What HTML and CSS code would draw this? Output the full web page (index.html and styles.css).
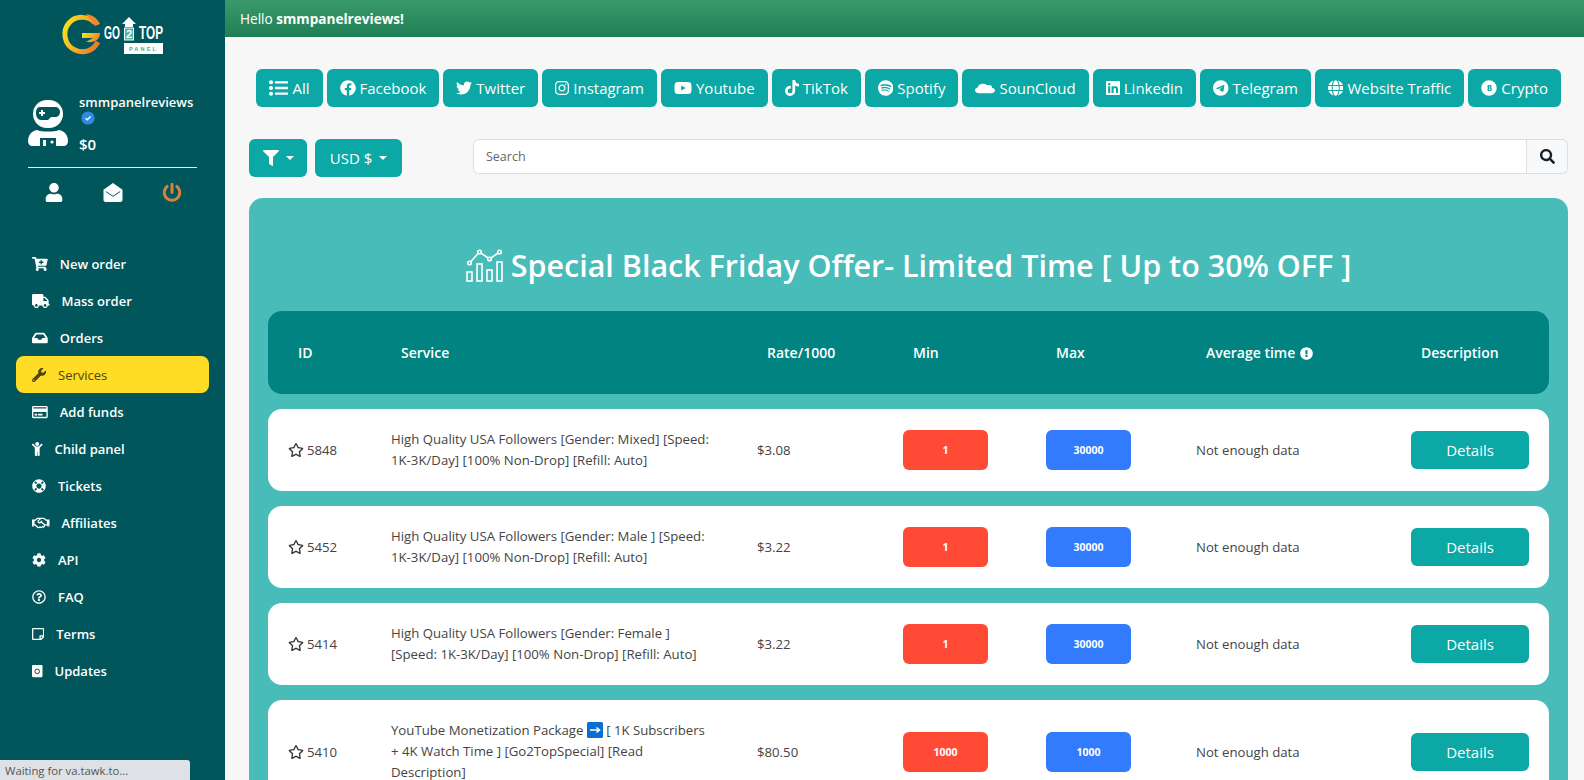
FILE: index.html
```html
<!DOCTYPE html>
<html lang="en">
<head>
    <meta charset="UTF-8">
    <meta name="viewport" content="width=device-width, initial-scale=1.0">
    <title>Services</title>
    <link rel="stylesheet" href="styles.css">
</head>
<body>

<svg class="sprite" xmlns="http://www.w3.org/2000/svg">
    <symbol id="star" viewBox="0 0 576 512"><path d="M528.1 171.5L382 150.2 316.7 17.8c-11.7-23.6-45.6-23.9-57.4 0L194 150.2 47.9 171.5c-26.2 3.8-36.7 36.1-17.7 54.6l105.7 103-25 145.5c-4.5 26.3 23.2 46 46.4 33.7L288 439.6l130.7 68.7c23.2 12.2 50.9-7.4 46.4-33.7l-25-145.5 105.7-103c19-18.5 8.5-50.8-17.7-54.6zM388.6 312.3l23.7 138.4L288 385.4l-124.3 65.3 23.7-138.4-100.6-98 139-20.2 62.2-126 62.2 126 139 20.2-100.6 98z"/></symbol>
</svg>

<aside class="sidebar">
    <svg class="logo" viewBox="0 0 102 40" xmlns="http://www.w3.org/2000/svg">
        <defs>
            <linearGradient id="logoGrad" x1="0" y1="0.3" x2="1" y2="0.7">
                <stop offset="0" stop-color="#f7dc1f"/>
                <stop offset="0.55" stop-color="#f5a623"/>
                <stop offset="1" stop-color="#ef7a2c"/>
            </linearGradient>
        </defs>
        <path d="M33 9 C27 2 14 1 7 9 C0 17 2 31 13 36 C22 40 31 37 36 28" fill="none" stroke="url(#logoGrad)" stroke-width="5"/>
        <path d="M24 0 C31 1 36 5 38 10 L33 12 C31 8 28 4 24 0Z" fill="#f2872b"/>
        <path d="M20 19 H38 C38 25 34 29 24 28 L31 24 H20Z" fill="url(#logoGrad)"/>
        <text class="logo-word" x="42" y="25" textLength="16" lengthAdjust="spacingAndGlyphs">GO</text>
        <path d="M67 3 L74 10 H71 V13 H63 V10 H60Z" fill="#fff"/>
        <rect x="62.5" y="14" width="9" height="12" fill="#4fb5a8" stroke="#fff"/>
        <text class="logo-two" x="67" y="24" text-anchor="middle">2</text>
        <text class="logo-word" x="77" y="25" textLength="24" lengthAdjust="spacingAndGlyphs">TOP</text>
        <rect x="62" y="29" width="39" height="11" fill="#fff"/>
        <text class="logo-panel" x="81.5" y="37" text-anchor="middle">PANEL</text>
    </svg>

    <div class="user-box">
        <svg class="avatar" viewBox="0 0 40 46" xmlns="http://www.w3.org/2000/svg">
            <rect x="5" y="0" width="30" height="28" rx="14" fill="#fff"/>
            <path d="M12 7 H27 C30 7 32 9 32 12 C32 15 30 17 27 17 H23 L20 20 H13 C10 20 8 17 8 13 C8 10 9 7 12 7Z" fill="#00565b"/>
            <path d="M13 10 H15 V12 H17 V14 H15 V16 H13 V14 H11 V12 H13Z" fill="#fff"/>
            <path d="M9 30 C13 32 27 32 31 30 C37 31 40 36 40 41 C40 44 38 46 36 46 H28 V38 H12 V46 H4 C2 46 0 44 0 41 C0 36 3 31 9 30Z" fill="#fff"/>
            <rect x="15" y="40" width="3" height="6" fill="#fff"/>
            <circle cx="24" cy="42" r="1.6" fill="#fff"/>
        </svg>
        <div class="user-info">
            <div class="user-name">smmpanelreviews</div>
            <svg class="verified" viewBox="0 0 14 14" xmlns="http://www.w3.org/2000/svg">
                <circle cx="7" cy="7" r="6.6" fill="#2f8be0"/>
                <path d="M4.5 7.3 L6.2 8.8 L9.6 5.4" fill="none" stroke="#fff" stroke-width="1.4"/>
            </svg>
            <div class="user-balance">$0</div>
        </div>
    </div>
    <div class="user-divider"></div>
    <div class="user-links">
        <svg class="link-icon" viewBox="0 0 448 512" xmlns="http://www.w3.org/2000/svg"><path d="M224 256c70.7 0 128-57.3 128-128S294.7 0 224 0 96 57.3 96 128s57.3 128 128 128zm89.6 32h-16.7c-22.2 10.2-46.9 16-72.9 16s-50.6-5.8-72.9-16h-16.7C60.2 288 0 348.2 0 422.4V464c0 26.5 21.5 48 48 48h352c26.5 0 48-21.5 48-48v-41.6c0-74.2-60.2-134.4-134.4-134.4z"/></svg>
        <svg class="link-icon" viewBox="0 0 20 20" xmlns="http://www.w3.org/2000/svg">
            <path d="M10 0 L20 7 V18 C20 19 19 20 18 20 H2 C1 20 0 19 0 18 V7Z"/>
            <path class="mail-fold" d="M2.5 9 L10 14 L17.5 9"/>
        </svg>
        <svg class="link-icon link-power" viewBox="0 0 512 512" xmlns="http://www.w3.org/2000/svg"><path d="M400 54.1c63 45 104 118.6 104 201.9 0 136.8-110.8 247.7-247.5 248C120 504.3 8.2 393 8 256.4 7.9 173.1 48.9 99.3 111.8 54.2c11.7-8.3 28-4.8 35 7.7L162.6 90c5.9 10.5 3.1 23.8-6.6 31-41.5 30.8-68 79.6-68 134.9-.1 92.3 74.5 168.1 168 168.1 91.6 0 168.6-74.2 168-169.1-.3-51.8-24.7-101.8-68.1-134-9.7-7.2-12.4-20.5-6.5-30.9l15.8-28.1c7-12.4 23.2-16.1 34.8-7.9zM296 264V24c0-13.3-10.7-24-24-24h-32c-13.3 0-24 10.7-24 24v240c0 13.3 10.7 24 24 24h32c13.3 0 24-10.7 24-24z"/></svg>
    </div>

    <nav class="side-nav">
        <a class="nav-item">
            <svg viewBox="0 0 576 512" xmlns="http://www.w3.org/2000/svg"><path d="M504.717 320H211.572l6.545 32h268.418c15.401 0 26.816 14.301 23.403 29.319l-5.517 24.276C523.112 414.668 536 433.828 536 456c0 31.202-25.519 56.444-56.824 55.994-29.823-.429-54.35-24.631-55.155-54.447-.44-16.287 6.085-31.049 16.803-41.548H231.176C241.553 426.165 248 440.326 248 456c0 31.813-26.528 57.431-58.67 55.938-28.54-1.325-51.751-24.385-53.251-52.917-1.158-22.034 10.436-41.455 28.051-51.586L93.883 64H24C10.745 64 0 53.255 0 40V24C0 10.745 10.745 0 24 0h102.529c11.401 0 21.228 8.021 23.513 19.19L159.208 64H551.99c15.401 0 26.816 14.301 23.403 29.319l-47.273 208C525.637 312.246 515.923 320 504.717 320zM408 168h-48v-40c0-8.837-7.163-16-16-16h-16c-8.837 0-16 7.163-16 16v40h-48c-8.837 0-16 7.163-16 16v16c0 8.837 7.163 16 16 16h48v40c0 8.837 7.163 16 16 16h16c8.837 0 16-7.163 16-16v-40h48c8.837 0 16-7.163 16-16v-16c0-8.837-7.163-16-16-16z"/></svg>
            New order
        </a>
        <a class="nav-item">
            <svg viewBox="0 0 640 512" xmlns="http://www.w3.org/2000/svg"><path d="M624 352h-16V243.9c0-12.7-5.1-24.9-14.1-33.9L494 110.1c-9-9-21.2-14.1-33.9-14.1H416V48c0-26.5-21.5-48-48-48H48C21.5 0 0 21.5 0 48v320c0 26.5 21.5 48 48 48h16c0 53 43 96 96 96s96-43 96-96h128c0 53 43 96 96 96s96-43 96-96h48c8.8 0 16-7.2 16-16v-32c0-8.8-7.2-16-16-16zM160 464c-26.5 0-48-21.5-48-48s21.5-48 48-48 48 21.5 48 48-21.5 48-48 48zm320 0c-26.5 0-48-21.5-48-48s21.5-48 48-48 48 21.5 48 48-21.5 48-48 48zm80-208H416V144h44.1l99.9 99.9V256z"/></svg>
            Mass order
        </a>
        <a class="nav-item">
            <svg viewBox="0 0 576 512" xmlns="http://www.w3.org/2000/svg"><path d="M567.938 243.908L462.25 85.374A48.003 48.003 0 0 0 422.311 64H153.689a48 48 0 0 0-39.938 21.374L8.062 243.908A47.994 47.994 0 0 0 0 270.533V400c0 26.51 21.49 48 48 48h480c26.51 0 48-21.49 48-48V270.533a47.994 47.994 0 0 0-8.062-26.625zM162.252 128h251.497l85.333 128H376l-32 64H232l-32-64H76.918l85.334-128z"/></svg>
            Orders
        </a>
        <a class="nav-item active">
            <svg viewBox="0 0 512 512" xmlns="http://www.w3.org/2000/svg"><path d="M507.73 109.1c-2.24-9.03-13.54-12.09-20.12-5.51l-74.36 74.36-67.88-11.31-11.31-67.88 74.36-74.36c6.62-6.62 3.43-17.9-5.66-20.16-47.38-11.74-99.55.91-136.58 37.93-39.64 39.64-50.55 97.1-34.05 147.2L18.74 402.76c-24.99 24.99-24.99 65.51 0 90.5 24.99 24.99 65.51 24.99 90.5 0l213.21-213.21c50.12 16.71 107.47 5.68 147.37-34.22 37.07-37.07 49.7-89.32 37.91-136.73zM64 472c-13.25 0-24-10.75-24-24 0-13.26 10.75-24 24-24s24 10.74 24 24c0 13.25-10.75 24-24 24z"/></svg>
            Services
        </a>
        <a class="nav-item">
            <svg viewBox="0 0 576 512" xmlns="http://www.w3.org/2000/svg"><path d="M527.9 32H48.1C21.5 32 0 53.5 0 80v352c0 26.5 21.5 48 48.1 48h479.8c26.6 0 48.1-21.5 48.1-48V80c0-26.5-21.5-48-48.1-48zM54.1 80h467.8c3.3 0 6 2.7 6 6v42H48.1V86c0-3.3 2.7-6 6-6zm467.8 352H54.1c-3.3 0-6-2.7-6-6V256h479.8v170c0 3.3-2.7 6-6 6zM192 332v40c0 6.6-5.4 12-12 12h-72c-6.6 0-12-5.4-12-12v-40c0-6.6 5.4-12 12-12h72c6.6 0 12 5.4 12 12zm192 0v40c0 6.6-5.4 12-12 12H236c-6.6 0-12-5.4-12-12v-40c0-6.6 5.4-12 12-12h136c6.6 0 12 5.4 12 12z"/></svg>
            Add funds
        </a>
        <a class="nav-item">
            <svg viewBox="0 0 384 512" xmlns="http://www.w3.org/2000/svg"><path d="M120 72c0-39.765 32.235-72 72-72s72 32.235 72 72c0 39.764-32.235 72-72 72s-72-32.236-72-72zm254.627 1.373c-12.496-12.497-32.758-12.497-45.254 0L242.745 160H141.254L54.627 73.373c-12.496-12.497-32.758-12.497-45.254 0-12.497 12.497-12.497 32.758 0 45.255L104 213.254V480c0 17.673 14.327 32 32 32h16c17.673 0 32-14.327 32-32V368h16v112c0 17.673 14.327 32 32 32h16c17.673 0 32-14.327 32-32V213.254l94.627-94.627c12.497-12.497 12.497-32.757 0-45.254z"/></svg>
            Child panel
        </a>
        <a class="nav-item">
            <svg viewBox="0 0 512 512" xmlns="http://www.w3.org/2000/svg"><path d="M256 8C119.033 8 8 119.033 8 256s111.033 248 248 248 248-111.033 248-248S392.967 8 256 8zm173.696 119.559l-63.399 63.399c-10.987-18.559-26.67-34.252-45.255-45.255l63.399-63.399a218.396 218.396 0 0 1 45.255 45.255zM256 352c-53.019 0-96-42.981-96-96s42.981-96 96-96 96 42.981 96 96-42.981 96-96 96zM127.559 82.304l63.399 63.399c-18.559 10.987-34.252 26.67-45.255 45.255l-63.399-63.399a218.372 218.372 0 0 1 45.255-45.255zM82.304 384.441l63.399-63.399c10.987 18.559 26.67 34.252 45.255 45.255l-63.399 63.399a218.396 218.396 0 0 1-45.255-45.255zm302.137 45.255l-63.399-63.399c18.559-10.987 34.252-26.67 45.255-45.255l63.399 63.399a218.429 218.429 0 0 1-45.255 45.255z"/></svg>
            Tickets
        </a>
        <a class="nav-item">
            <svg viewBox="0 0 640 512" xmlns="http://www.w3.org/2000/svg"><path d="M519.2 127.9l-47.6-47.6A56.252 56.252 0 0 0 432 64H205.2c-14.8 0-29.1 5.9-39.6 16.3L118 127.9H0v255.7h64c17.6 0 31.8-14.2 31.9-31.7h9.1l84.6 76.4c30.9 25.1 73.8 25.7 105.6 3.8 12.5 10.8 26 15.9 41.1 15.9 18.2 0 35.3-7.4 48.8-24 22.1 8.7 48.2 2.6 64-16.8l26.2-32.3c5.6-6.9 9.1-14.8 10.9-23h57.9c.1 17.5 14.4 31.7 31.9 31.7h64V127.9H519.2zM48 351.6c-8.8 0-16-7.2-16-16s7.2-16 16-16 16 7.2 16 16c0 8.9-7.2 16-16 16zm390-6.9l-26.1 32.2c-2.8 3.4-7.8 4-11.3 1.2l-23.9-19.4-30 36.5c-6 7.3-15 4.8-18 2.4l-36.8-31.5-15.6 19.2c-13.9 17.1-39.2 19.7-55.3 6.6l-97.3-88H96V175.8h41.9l61.7-61.6c2-.8 3.7-1.5 5.7-2.3H262l-38.7 35.5c-29.4 26.9-31.1 72.3-4.4 101.3 14.8 16.2 61.2 41.2 101.5 4.4l8.2-7.5 108.2 87.8c3.4 2.8 3.9 7.9 1.2 11.3zm106-40.8h-69.2c-2.3-2.8-4.9-5.4-7.7-7.7l-102.7-83.4 12.5-11.4c6.5-6 7-16.1 1-22.6L367 167.1c-6-6.5-16.1-6.9-22.6-1l-55.2 50.6c-9.5 8.7-25.7 9.4-34.6 0-9.3-9.9-8.5-25.1 1.2-33.9l65.6-60.1c7.4-6.8 17-10.5 27-10.5l83.7-.2c2.1 0 4.1.8 5.5 2.3l61.7 61.6H544v128zm48 47.7c-8.8 0-16-7.2-16-16s7.2-16 16-16 16 7.2 16 16c0 8.9-7.2 16-16 16z"/></svg>
            Affiliates
        </a>
        <a class="nav-item">
            <svg viewBox="0 0 512 512" xmlns="http://www.w3.org/2000/svg"><path d="M487.4 315.7l-42.6-24.6c4.3-23.2 4.3-47 0-70.2l42.6-24.6c4.9-2.8 7.1-8.6 5.5-14-11.1-35.6-30-67.8-54.7-94.6-3.8-4.1-10-5.1-14.8-2.3L380.8 110c-17.9-15.4-38.5-27.3-60.8-35.1V25.8c0-5.6-3.9-10.5-9.4-11.7-36.7-8.2-74.3-7.8-109.2 0-5.5 1.2-9.4 6.1-9.4 11.7V75c-22.2 7.9-42.8 19.8-60.8 35.1L88.7 85.5c-4.9-2.8-11-1.9-14.8 2.3-24.7 26.7-43.6 58.9-54.7 94.6-1.7 5.4.6 11.2 5.5 14L67.3 221c-4.3 23.2-4.3 47 0 70.2l-42.6 24.6c-4.9 2.8-7.1 8.6-5.5 14 11.1 35.6 30 67.8 54.7 94.6 3.8 4.1 10 5.1 14.8 2.3l42.6-24.6c17.9 15.4 38.5 27.3 60.8 35.1v49.2c0 5.6 3.9 10.5 9.4 11.7 36.7 8.2 74.3 7.8 109.2 0 5.5-1.2 9.4-6.1 9.4-11.7v-49.2c22.2-7.9 42.8-19.8 60.8-35.1l42.6 24.6c4.9 2.8 11 1.9 14.8-2.3 24.7-26.7 43.6-58.9 54.7-94.6 1.5-5.5-.7-11.3-5.6-14.1zM256 336c-44.1 0-80-35.9-80-80s35.9-80 80-80 80 35.9 80 80-35.9 80-80 80z"/></svg>
            API
        </a>
        <a class="nav-item">
            <svg viewBox="0 0 512 512" xmlns="http://www.w3.org/2000/svg"><path d="M256 8C119.043 8 8 119.083 8 256c0 136.997 111.043 248 248 248s248-111.003 248-248C504 119.083 392.957 8 256 8zm0 448c-110.532 0-200-89.431-200-200 0-110.495 89.472-200 200-200 110.491 0 200 89.471 200 200 0 110.53-89.431 200-200 200zm107.244-255.2c0 67.052-72.421 68.084-72.421 92.863V300c0 6.627-5.373 12-12 12h-45.647c-6.627 0-12-5.373-12-12v-8.659c0-35.745 27.1-50.034 47.579-61.516 17.561-9.845 28.324-16.541 28.324-29.579 0-17.246-21.999-28.693-39.784-28.693-23.189 0-33.894 10.977-48.942 29.969-4.057 5.12-11.46 6.071-16.666 2.124l-27.824-21.098c-5.107-3.872-6.251-11.066-2.644-16.363C184.846 131.491 214.94 112 261.794 112c49.071 0 101.45 38.304 101.45 88.8zM298 368c0 23.159-18.841 42-42 42s-42-18.841-42-42 18.841-42 42-42 42 18.841 42 42z"/></svg>
            FAQ
        </a>
        <a class="nav-item">
            <svg viewBox="0 0 448 512" xmlns="http://www.w3.org/2000/svg"><path d="M448 348.106V80c0-26.51-21.49-48-48-48H48C21.49 32 0 53.49 0 80v351.988c0 26.51 21.49 48 48 48h268.118a48 48 0 0 0 33.941-14.059l83.882-83.882A48 48 0 0 0 448 348.106zm-128 80v-76.118h76.118L320 428.106zM400 80v223.988H296c-13.255 0-24 10.745-24 24v104H48V80h352z"/></svg>
            Terms
        </a>
        <a class="nav-item">
            <svg viewBox="0 0 384 512" xmlns="http://www.w3.org/2000/svg">
                <rect y="32" width="384" height="448" rx="40"/>
                <circle class="updates-ring" cx="192" cy="270" r="85"/>
            </svg>
            Updates
        </a>
    </nav>
</aside>

<main class="content">
    <div class="hello-bar">Hello&nbsp;<b>smmpanelreviews!</b></div>

    <div class="page-body">
        <div class="category-list">
            <a class="chip">
                <svg viewBox="0 0 17 14" xmlns="http://www.w3.org/2000/svg">
                    <circle cx="1.8" cy="2" r="1.8"/><circle cx="1.8" cy="7" r="1.8"/><circle cx="1.8" cy="12" r="1.8"/>
                    <rect x="5" y="1" width="12" height="2" rx="1"/><rect x="5" y="6" width="12" height="2" rx="1"/><rect x="5" y="11" width="12" height="2" rx="1"/>
                </svg>
                All
            </a>
            <a class="chip">
                <svg viewBox="0 0 512 512" xmlns="http://www.w3.org/2000/svg"><path d="M504 256C504 119 393 8 256 8S8 119 8 256c0 123.78 90.69 226.38 209.25 245V327.69h-63V256h63v-54.64c0-62.15 37-96.48 93.67-96.48 27.14 0 55.52 4.84 55.52 4.84v61h-31.28c-30.8 0-40.41 19.12-40.41 38.73V256h68.78l-11 71.69h-57.78V501C413.31 482.38 504 379.78 504 256z"/></svg>
                Facebook
            </a>
            <a class="chip">
                <svg viewBox="0 0 512 512" xmlns="http://www.w3.org/2000/svg"><path d="M459.37 151.716c.325 4.548.325 9.097.325 13.645 0 138.72-105.583 298.558-298.558 298.558-59.452 0-114.68-17.219-161.137-47.106 8.447.974 16.568 1.299 25.34 1.299 49.055 0 94.213-16.568 130.274-44.832-46.132-.975-84.792-31.188-98.112-72.772 6.498.974 12.995 1.624 19.818 1.624 9.421 0 18.843-1.3 27.614-3.573-48.081-9.747-84.143-51.98-84.143-102.985v-1.299c13.969 7.797 30.214 12.67 47.431 13.319-28.264-18.843-46.781-51.005-46.781-87.391 0-19.492 5.197-37.36 14.294-52.954 51.655 63.675 129.3 105.258 216.365 109.807-1.624-7.797-2.599-15.918-2.599-24.04 0-57.828 46.782-104.934 104.934-104.934 30.213 0 57.502 12.67 76.67 33.137 23.715-4.548 46.456-13.32 66.599-25.34-7.798 24.366-24.366 44.833-46.132 57.827 21.117-2.273 41.584-8.122 60.426-16.243-14.292 20.791-32.161 39.308-52.628 54.253z"/></svg>
                Twitter
            </a>
            <a class="chip">
                <svg viewBox="0 0 448 512" xmlns="http://www.w3.org/2000/svg"><path d="M224.1 141c-63.6 0-114.9 51.3-114.9 114.9s51.3 114.9 114.9 114.9S339 319.5 339 255.9 287.7 141 224.1 141zm0 189.6c-41.1 0-74.7-33.5-74.7-74.7s33.5-74.7 74.7-74.7 74.7 33.5 74.7 74.7-33.6 74.7-74.7 74.7zm146.4-194.3c0 14.9-12 26.8-26.8 26.8-14.9 0-26.8-12-26.8-26.8s12-26.8 26.8-26.8 26.8 12 26.8 26.8zm76.1 27.2c-1.7-35.9-9.9-67.7-36.2-93.9-26.2-26.2-58-34.4-93.9-36.2-37-2.1-147.9-2.1-184.9 0-35.8 1.7-67.6 9.9-93.9 36.1s-34.4 58-36.2 93.9c-2.1 37-2.1 147.9 0 184.9 1.7 35.9 9.9 67.7 36.2 93.9s58 34.4 93.9 36.2c37 2.1 147.9 2.1 184.9 0 35.9-1.7 67.7-9.9 93.9-36.2 26.2-26.2 34.4-58 36.2-93.9 2.1-37 2.1-147.8 0-184.8zM398.8 388c-7.8 19.6-22.9 34.7-42.6 42.6-29.5 11.7-99.5 9-132.1 9s-102.7 2.6-132.1-9c-19.6-7.8-34.7-22.9-42.6-42.6-11.7-29.5-9-99.5-9-132.1s-2.6-102.7 9-132.1c7.8-19.6 22.9-34.7 42.6-42.6 29.5-11.7 99.5-9 132.1-9s102.7-2.6 132.1 9c19.6 7.8 34.7 22.9 42.6 42.6 11.7 29.5 9 99.5 9 132.1s2.7 102.7-9 132.1z"/></svg>
                Instagram
            </a>
            <a class="chip">
                <svg viewBox="0 0 576 512" xmlns="http://www.w3.org/2000/svg"><path d="M549.655 124.083c-6.281-23.65-24.787-42.276-48.284-48.597C458.781 64 288 64 288 64S117.22 64 74.629 75.486c-23.497 6.322-42.003 24.947-48.284 48.597-11.412 42.867-11.412 132.305-11.412 132.305s0 89.438 11.412 132.305c6.281 23.65 24.787 41.5 48.284 47.821C117.22 448 288 448 288 448s170.78 0 213.371-11.486c23.497-6.321 42.003-24.171 48.284-47.821 11.412-42.867 11.412-132.305 11.412-132.305s0-89.438-11.412-132.305zm-317.51 213.508V175.185l142.739 81.205-142.739 81.201z"/></svg>
                Youtube
            </a>
            <a class="chip">
                <svg viewBox="0 0 448 512" xmlns="http://www.w3.org/2000/svg"><path d="M448,209.91a210.06,210.06,0,0,1-122.77-39.25V349.38A162.55,162.55,0,1,1,185,188.31V278.2a74.62,74.62,0,1,0,52.23,71.18V0l88,0a121.18,121.18,0,0,0,1.86,22.17h0A122.18,122.18,0,0,0,381,102.39a121.43,121.43,0,0,0,67,20.14Z"/></svg>
                TikTok
            </a>
            <a class="chip">
                <svg viewBox="0 0 496 512" xmlns="http://www.w3.org/2000/svg"><path d="M248 8C111.1 8 0 119.1 0 256s111.1 248 248 248 248-111.1 248-248S384.9 8 248 8zm100.7 364.9c-4.2 0-6.8-1.3-10.7-3.6-62.4-37.6-135-39.2-206.7-24.5-3.9 1-9 2.6-11.9 2.6-9.7 0-15.8-7.7-15.8-15.8 0-10.3 6.1-15.2 13.6-16.8 81.9-18.1 165.6-16.5 237 26.2 6.1 3.9 9.7 7.4 9.7 16.5s-7.1 15.4-15.2 15.4zm26.9-65.6c-5.2 0-8.7-2.3-12.3-4.2-62.5-37-155.7-51.9-238.6-29.4-4.8 1.3-7.4 2.6-11.9 2.6-10.7 0-19.4-8.7-19.4-19.4s5.2-17.8 15.5-20.7c27.8-7.8 56.2-13.6 97.8-13.6 64.9 0 127.6 16.1 177 45.5 8.1 4.8 11.3 11 11.3 19.7-.1 10.8-8.5 19.5-19.4 19.5zm31-76.2c-5.2 0-8.4-1.3-12.9-3.9-71.2-42.5-198.5-52.7-280.9-29.7-3.6 1-8.1 2.6-12.9 2.6-13.2 0-23.3-10.3-23.3-23.6 0-13.6 8.4-21.3 17.4-23.9 35.2-10.3 74.6-15.2 117.5-15.2 73 0 149.5 15.2 205.4 47.8 7.8 4.5 12.9 10.7 12.9 22.6 0 13.6-11 23.3-23.2 23.3z"/></svg>
                Spotify
            </a>
            <a class="chip">
                <svg class="cloud-icon" viewBox="0 0 640 512" xmlns="http://www.w3.org/2000/svg" preserveAspectRatio="none"><path d="M537.6 226.6c4.1-10.7 6.4-22.4 6.4-34.6 0-53-43-96-96-96-19.7 0-38.1 6-53.3 16.2C367 64.2 315.3 32 256 32c-88.4 0-160 71.6-160 160 0 2.7.1 5.4.2 8.1C40.2 219.8 0 273.2 0 336c0 79.5 64.5 144 144 144h368c70.7 0 128-57.3 128-128 0-61.9-44-113.6-102.4-125.4z"/></svg>
                SounCloud
            </a>
            <a class="chip">
                <svg viewBox="0 0 448 512" xmlns="http://www.w3.org/2000/svg"><path d="M416 32H31.9C14.3 32 0 46.5 0 64.3v383.4C0 465.5 14.3 480 31.9 480H416c17.6 0 32-14.5 32-32.3V64.3c0-17.8-14.4-32.3-32-32.3zM135.4 416H69V202.2h66.5V416zm-33.2-243c-21.3 0-38.5-17.3-38.5-38.5S80.9 96 102.2 96c21.2 0 38.5 17.3 38.5 38.5 0 21.3-17.2 38.5-38.5 38.5zm282.1 243h-66.4V312c0-24.8-.5-56.7-34.5-56.7-34.6 0-39.9 27-39.9 54.9V416h-66.4V202.2h63.7v29.2h.9c8.9-16.8 30.6-34.5 62.9-34.5 67.2 0 79.7 44.3 79.7 101.9V416z"/></svg>
                Linkedin
            </a>
            <a class="chip">
                <svg viewBox="0 0 496 512" xmlns="http://www.w3.org/2000/svg"><path d="M248,8C111.033,8,0,119.033,0,256S111.033,504,248,504,496,392.967,496,256,384.967,8,248,8ZM362.952,176.66c-3.732,39.215-19.881,134.378-28.1,178.3-3.476,18.584-10.322,24.816-16.948,25.425-14.4,1.326-25.338-9.517-39.287-18.661-21.827-14.308-34.158-23.215-55.346-37.177-24.485-16.135-8.612-25,5.342-39.5,3.652-3.793,67.107-61.51,68.335-66.746.153-.655.3-3.1-1.154-4.384s-3.59-.849-5.135-.5q-3.283.746-104.608,69.142-14.845,10.194-26.894,9.934c-8.855-.191-25.888-5.006-38.551-9.123-15.531-5.048-27.875-7.717-26.8-16.291q.84-6.7,18.45-13.7,108.446-47.248,144.628-62.3c68.872-28.647,83.183-33.623,92.511-33.789,2.052-.034,6.639.474,9.61,2.885a10.452,10.452,0,0,1,3.53,6.716A43.765,43.765,0,0,1,362.952,176.66Z"/></svg>
                Telegram
            </a>
            <a class="chip">
                <svg viewBox="0 0 496 512" xmlns="http://www.w3.org/2000/svg"><path d="M336.5 160C322 70.7 287.8 8 248 8s-74 62.7-88.5 152h177zM152 256c0 22.2 1.2 43.5 3.3 64h185.3c2.1-20.5 3.3-41.8 3.3-64s-1.2-43.5-3.3-64H155.3c-2.1 20.5-3.3 41.8-3.3 64zm324.7-96c-28.6-67.9-86.5-120.4-158-141.6 24.4 33.8 41.2 84.7 50 141.6h108zM177.2 18.4C105.8 39.6 47.8 92.1 19.3 160h108c8.7-56.9 25.5-107.8 49.9-141.6zM487.4 192H372.7c2.1 21 3.3 42.5 3.3 64s-1.2 43-3.3 64h114.6c5.5-20.5 8.6-41.8 8.6-64s-3.1-43.5-8.5-64zM120 256c0-21.5 1.2-43 3.3-64H8.6C3.2 212.5 0 233.8 0 256s3.2 43.5 8.6 64h114.6c-2-21-3.2-42.5-3.2-64zm39.5 96c14.5 89.3 48.7 152 88.5 152s74-62.7 88.5-152h-177zm159.3 141.6c71.4-21.2 129.4-73.7 158-141.6h-108c-8.8 56.9-25.6 107.8-50 141.6zM19.3 352c28.6 67.9 86.5 120.4 158 141.6-24.4-33.8-41.2-84.7-50-141.6h-108z"/></svg>
                Website Traffic
            </a>
            <a class="chip">
                <svg viewBox="0 0 512 512" xmlns="http://www.w3.org/2000/svg">
                    <path fill-rule="evenodd" d="M256 8a248 248 0 1 0 0 496a248 248 0 1 0 0-496zM210 160h70c40 0 60 20 60 48c0 20-10 34-26 42c22 6 36 22 36 46c0 34-26 56-66 56h-74zm44 36v44h22c14 0 22-8 22-22s-8-22-22-22zm0 78v46h28c16 0 24-8 24-23s-8-23-24-23z"/>
                </svg>
                Crypto
            </a>
        </div>

        <div class="toolbar">
            <a class="tool-btn filter-btn">
                <svg viewBox="0 0 512 512" xmlns="http://www.w3.org/2000/svg"><path d="M487.976 0H24.028C2.71 0-8.047 25.866 7.058 40.971L192 225.941V432c0 7.831 3.821 15.17 10.237 19.662l80 55.98C298.02 518.69 320 507.493 320 487.98V225.941l184.947-184.97C520.021 25.896 509.338 0 487.976 0z"/></svg>
                <span class="caret"></span>
            </a>
            <a class="tool-btn currency-btn">USD $ <span class="caret"></span></a>
            <div class="search-group">
                <input class="search-input" type="text" placeholder="Search">
                <button class="search-btn" type="button">
                    <svg viewBox="0 0 512 512" xmlns="http://www.w3.org/2000/svg"><path d="M505 442.7L405.3 343c-4.5-4.5-10.6-7-17-7H372c27.6-35.3 44-79.7 44-128C416 93.1 322.9 0 208 0S0 93.1 0 208s93.1 208 208 208c48.3 0 92.7-16.4 128-44v16.3c0 6.4 2.5 12.5 7 17l99.7 99.7c9.4 9.4 24.6 9.4 33.9 0l28.3-28.3c9.4-9.4 9.4-24.6.1-34zM208 336c-70.7 0-128-57.2-128-128 0-70.7 57.2-128 128-128 70.7 0 128 57.2 128 128 0 70.7-57.2 128-128 128z"/></svg>
                </button>
            </div>
        </div>

        <section class="offer-panel">
            <h2 class="offer-title">
                <svg viewBox="0 0 38 34" xmlns="http://www.w3.org/2000/svg">
                    <rect x="1" y="24" width="5" height="9"/>
                    <rect x="11" y="16" width="5" height="17"/>
                    <rect x="21" y="22" width="5" height="11"/>
                    <rect x="31" y="14" width="5" height="19"/>
                    <path d="M3.5 15 L13.5 4 L23.5 11 L33.5 4"/>
                    <circle class="dot" cx="3.5" cy="15" r="1.8"/>
                    <circle class="dot" cx="13.5" cy="4" r="1.8"/>
                    <circle class="dot" cx="23.5" cy="11" r="1.8"/>
                    <circle class="dot" cx="33.5" cy="4" r="1.8"/>
                </svg>
                Special Black Friday Offer- Limited Time [ Up to 30% OFF ]
            </h2>

            <div class="table-head">
                <div class="head-id">ID</div>
                <div>Service</div>
                <div>Rate/1000</div>
                <div>Min</div>
                <div>Max</div>
                <div class="head-avg">Average time
                    <svg viewBox="0 0 512 512" xmlns="http://www.w3.org/2000/svg"><path d="M504 256c0 136.997-111.043 248-248 248S8 392.997 8 256C8 119.083 119.043 8 256 8s248 111.083 248 248zm-248 50c-25.405 0-46 20.595-46 46s20.595 46 46 46 46-20.595 46-46-20.595-46-46-46zm-43.673-165.346l7.418 136c.347 6.364 5.609 11.346 11.982 11.346h48.546c6.373 0 11.635-4.982 11.982-11.346l7.418-136c.375-6.874-5.098-12.654-11.982-12.654h-63.383c-6.884 0-12.356 5.78-11.981 12.654z"/></svg>
                </div>
                <div>Description</div>
            </div>

            <div class="service-row">
                <div class="cell-id"><svg class="star"><use href="#star"/></svg>5848</div>
                <div class="cell-service">High Quality USA Followers [Gender: Mixed] [Speed: 1K-3K/Day] [100% Non-Drop] [Refill: Auto]</div>
                <div>$3.08</div>
                <div><span class="pill pill-min">1</span></div>
                <div><span class="pill pill-max">30000</span></div>
                <div>Not enough data</div>
                <div><a class="details-btn">Details</a></div>
            </div>

            <div class="service-row">
                <div class="cell-id"><svg class="star"><use href="#star"/></svg>5452</div>
                <div class="cell-service">High Quality USA Followers [Gender: Male ] [Speed: 1K-3K/Day] [100% Non-Drop] [Refill: Auto]</div>
                <div>$3.22</div>
                <div><span class="pill pill-min">1</span></div>
                <div><span class="pill pill-max">30000</span></div>
                <div>Not enough data</div>
                <div><a class="details-btn">Details</a></div>
            </div>

            <div class="service-row">
                <div class="cell-id"><svg class="star"><use href="#star"/></svg>5414</div>
                <div class="cell-service">High Quality USA Followers [Gender: Female ] [Speed: 1K-3K/Day] [100% Non-Drop] [Refill: Auto]</div>
                <div>$3.22</div>
                <div><span class="pill pill-min">1</span></div>
                <div><span class="pill pill-max">30000</span></div>
                <div>Not enough data</div>
                <div><a class="details-btn">Details</a></div>
            </div>

            <div class="service-row">
                <div class="cell-id"><svg class="star"><use href="#star"/></svg>5410</div>
                <div class="cell-service">YouTube Monetization Package <svg class="arrow-emoji" viewBox="0 0 16 16" xmlns="http://www.w3.org/2000/svg"><rect width="16" height="16" rx="1.5" fill="#0a6fd0"/><path d="M3 8 H12 M9.5 5.5 L12.5 8 L9.5 10.5" fill="none" stroke="#fff" stroke-width="1.6"/></svg> [ 1K Subscribers + 4K Watch Time ] [Go2TopSpecial] [Read Description]</div>
                <div>$80.50</div>
                <div><span class="pill pill-min">1000</span></div>
                <div><span class="pill pill-max">1000</span></div>
                <div>Not enough data</div>
                <div><a class="details-btn">Details</a></div>
            </div>
        </section>
    </div>
</main>

<div class="status-bubble">Waiting for va.tawk.to...</div>

</body>
</html>
```

FILE: styles.css
```css
* {
    box-sizing: border-box;
}
html, body {
    height: 100%;
}
body {
    margin: 0;
    display: flex;
    overflow: hidden;
    font-family: "Open Sans", "Noto Sans", sans-serif;
    font-size: 13.2px;
    color: #444;
    background-color: #f7f7f7;
}
.sprite {
    display: none;
}

/* sidebar */
.sidebar {
    width: 225px;
    flex-shrink: 0;
    padding-top: 14px;
    background-color: #00565b;
    color: #fff;
}
.logo {
    display: block;
    width: 102px;
    height: 40px;
    margin-left: 62px;
    overflow: visible;
}
.logo-word {
    font-family: "Liberation Sans", sans-serif;
    font-size: 18px;
    font-weight: bold;
    fill: #fff;
}
.logo-two {
    font-family: "Liberation Sans", sans-serif;
    font-size: 11px;
    font-weight: bold;
    fill: #fff;
}
.logo-panel {
    font-family: "Liberation Sans", sans-serif;
    font-size: 5.5px;
    font-weight: bold;
    letter-spacing: 2.2px;
    fill: #4aa99b;
}
.user-box {
    display: flex;
    gap: 11px;
    height: 71px;
    margin-top: 39px;
    padding-left: 28px;
}
.avatar {
    width: 40px;
    height: 46px;
    margin-top: 7px;
}
.user-name {
    font-size: 13px;
    font-weight: 600;
    line-height: 18px;
}
.verified {
    display: block;
    width: 14px;
    height: 14px;
    margin: 0 0 0 2px;
}
.user-balance {
    margin-top: 8px;
    font-size: 15px;
    font-weight: 600;
    line-height: 22px;
}
.user-divider {
    height: 1px;
    margin: 3px 28px 0;
    background-color: #e8f2f2;
}
.user-links {
    display: flex;
    justify-content: space-between;
    margin: 15px 43px 0 44px;
}
.link-icon {
    width: 20px;
    height: 19px;
    fill: #fff;
}
.mail-fold {
    fill: none;
    stroke: #00565b;
    stroke-width: 1;
}
.link-power {
    fill: #d9823e;
}
.side-nav {
    margin: 43px 16px 0;
}
.nav-item {
    display: flex;
    align-items: center;
    gap: 12px;
    height: 37px;
    padding-left: 16px;
    border-radius: 8px;
    font-size: 13px;
    font-weight: 600;
    color: #fff;
}
.nav-item svg {
    height: 14px;
    fill: #fff;
    flex-shrink: 0;
}
.nav-item.active {
    background-color: #ffdc26;
    color: #4d4412;
    font-weight: 500;
}
.nav-item.active svg {
    fill: #4d4412;
}
.updates-ring {
    fill: none;
    stroke: #00565b;
    stroke-width: 36;
}

/* main area */
.content {
    flex: 1;
    min-width: 0;
}
.hello-bar {
    display: flex;
    align-items: center;
    height: 37px;
    padding-left: 15px;
    background: linear-gradient(#3b9a6b, #1f7f54);
    font-size: 13.6px;
    color: #fff;
}
.page-body {
    padding: 32px 16px 0 24px;
}
.category-list {
    display: flex;
    justify-content: center;
    gap: 4px;
}
.chip {
    display: flex;
    align-items: center;
    gap: 4px;
    height: 38px;
    padding: 0 13px;
    border-radius: 6px;
    background-color: #0ba8a5;
    font-size: 15px;
    color: #fff;
    white-space: nowrap;
}
.chip svg {
    height: 16px;
    fill: #fff;
}
.chip .cloud-icon {
    width: 20px;
    height: 11px;
}
.toolbar {
    display: flex;
    align-items: flex-start;
    gap: 8px;
    margin-top: 32px;
}
.tool-btn {
    display: flex;
    align-items: center;
    justify-content: center;
    height: 38px;
    border-radius: 6px;
    background-color: #0ba8a5;
    color: #fff;
    font-size: 15px;
}
.tool-btn svg {
    height: 16px;
    fill: #fff;
}
.filter-btn {
    width: 58px;
}
.currency-btn {
    width: 87px;
}
.caret {
    width: 0;
    height: 0;
    margin-left: 7px;
    border-top: 4px solid #fff;
    border-left: 4px solid transparent;
    border-right: 4px solid transparent;
}
.search-group {
    display: flex;
    flex: 1;
    height: 35px;
    margin-left: 63px;
}
.search-input {
    flex: 1;
    padding: 0 12px;
    border: 1px solid #dedede;
    border-radius: 6px 0 0 6px;
    background-color: #fff;
    font-family: inherit;
    font-size: 12.5px;
}
.search-input::placeholder {
    color: #666;
}
.search-btn {
    width: 41px;
    padding: 0;
    border: 1px solid #dedede;
    border-left: none;
    border-radius: 0 6px 6px 0;
    background-color: #f8f9fb;
}
.search-btn svg {
    display: block;
    width: 15px;
    margin: 0 auto;
    fill: #14212b;
}

/* services table */
.offer-panel {
    margin-top: 21px;
    padding: 0 19px 30px;
    border-radius: 14px;
    background-color: #47bcb9;
}
.offer-title {
    display: flex;
    align-items: center;
    justify-content: center;
    gap: 7px;
    height: 113px;
    margin: 0;
    padding-top: 21px;
    font-size: 30.5px;
    font-weight: 600;
    color: #fff;
}
.offer-title svg {
    width: 38px;
    height: 34px;
    fill: none;
    stroke: #fff;
    stroke-width: 1.6;
}
.offer-title .dot {
    fill: #47bcb9;
}
.table-head,
.service-row {
    display: grid;
    grid-template-columns: 123px 366px 146px 143px 150px 215px 138px;
    align-items: center;
    margin-bottom: 15px;
    border-radius: 14px;
}
.table-head {
    height: 83px;
    padding-bottom: 1px;
    background-color: #008381;
    color: #fff;
    font-size: 14px;
    font-weight: 600;
}
.table-head > div {
    padding-left: 10px;
}
.table-head .head-id {
    padding-left: 30px;
}
.head-avg svg {
    width: 13px;
    height: 13px;
    margin-left: 1px;
    vertical-align: -2px;
    fill: #fff;
}
.service-row {
    min-height: 82px;
    padding: 20px 0;
    background-color: #fff;
}
.cell-id {
    display: flex;
    align-items: center;
    gap: 3px;
    padding-left: 20px;
}
.star {
    width: 16px;
    height: 14px;
    fill: #333;
}
.cell-service {
    max-width: 322px;
    line-height: 21px;
}
.arrow-emoji {
    width: 16px;
    height: 16px;
    vertical-align: -3px;
}
.pill {
    display: flex;
    align-items: center;
    justify-content: center;
    width: 85px;
    height: 40px;
    border-radius: 6px;
    font-size: 10.5px;
    font-weight: 700;
    color: #fff;
}
.pill-min {
    background-color: #ff4b36;
}
.pill-max {
    background-color: #327bfd;
}
.details-btn {
    display: flex;
    align-items: center;
    justify-content: center;
    width: 118px;
    height: 38px;
    border-radius: 6px;
    background-color: #0ba8a5;
    font-size: 15px;
    color: #fff;
}

/* browser status bubble */
.status-bubble {
    position: fixed;
    left: 0;
    bottom: 0;
    width: 190px;
    height: 20px;
    padding-left: 5px;
    border-top-right-radius: 3px;
    background-color: #dee1e6;
    font-size: 11.3px;
    line-height: 21px;
    color: #555;
}
```
